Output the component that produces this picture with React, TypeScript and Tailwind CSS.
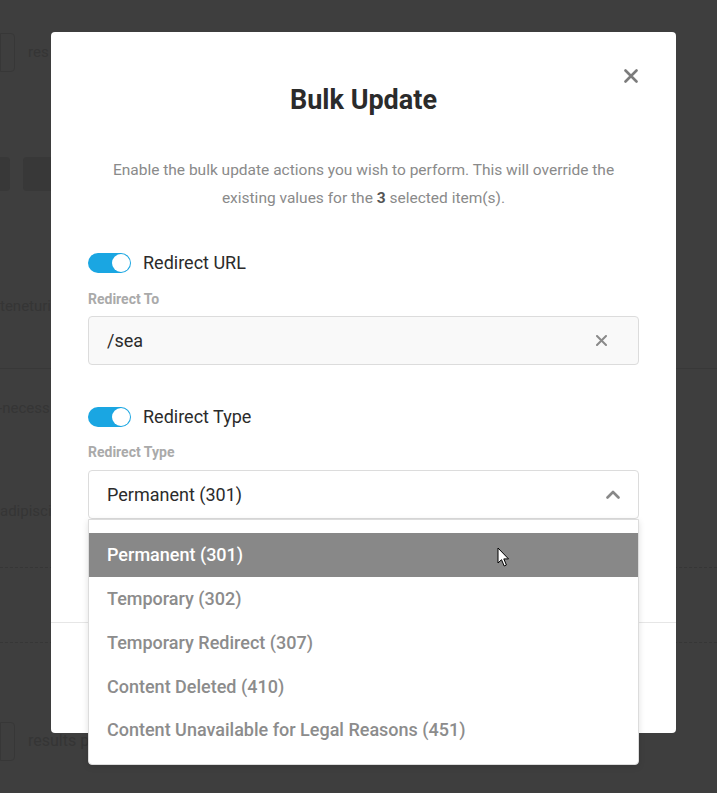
import { useState } from "react";

const OPTIONS = [
  "Permanent (301)",
  "Temporary (302)",
  "Temporary Redirect (307)",
  "Content Deleted (410)",
  "Content Unavailable for Legal Reasons (451)",
];

function Toggle({ on }: { on: boolean }) {
  return (
    <div
      className={
        "flex h-[20px] w-[43px] items-center rounded-full p-[1px] " +
        (on ? "justify-end bg-[#1aa6e2]" : "justify-start bg-[#cfcfcf]")
      }
    >
      <div className="h-[18px] w-[18px] rounded-full bg-white" />
    </div>
  );
}

function Cursor() {
  return (
    <svg width="13" height="21" viewBox="0 0 13 21" className="absolute left-[408px] top-[14px]">
      <path
        d="M1 1 L1 16 L4.5 12.7 L7.2 19 L9.4 18 L6.8 11.9 L11.5 11.9 Z"
        fill="#ffffff"
        stroke="#000000"
        strokeWidth="1"
        strokeLinejoin="round"
      />
    </svg>
  );
}

export default function App() {
  const [urlOn] = useState(true);
  const [typeOn] = useState(true);
  const [selected] = useState(0);

  return (
    <div className="relative h-[793px] w-[717px] overflow-hidden bg-[#3e3e3e] font-['Roboto',sans-serif]">
      {/* page behind the overlay */}
      <div className="flex flex-col text-[15px] text-[#353535]">
        <div className="mt-[33px] flex items-center gap-[13px]">
          <div className="h-[39px] w-[15px] rounded-r-[4px] border border-[#373737]" />
          <span>res</span>
        </div>
        <div className="mt-[85px] flex gap-[13px]">
          <div className="h-[34px] w-[10px] rounded-r-[4px] bg-[#383838]" />
          <div className="h-[34px] w-[40px] rounded-[4px] bg-[#383838]" />
        </div>
        <div className="mt-[104px]">teneturi</div>
        <div className="mt-[50px] h-px w-full bg-[#383838]" />
        <div className="mt-[28px] -ml-[2px]">-necess</div>
        <div className="mt-[81px]">adipisci</div>
        <div className="mt-[44px] border-t border-dashed border-[#363636]" />
        <div className="mt-[74px] border-t border-dashed border-[#363636]" />
        <div className="mt-[79px] flex items-center gap-[13px]">
          <div className="h-[39px] w-[15px] rounded-r-[4px] border border-[#373737]" />
          <span className="text-[16px]">results p</span>
        </div>
      </div>

      {/* modal */}
      <div className="absolute left-[51px] top-[32px] flex h-[701px] w-[625px] flex-col rounded-[4px] bg-white">
        <div className="relative flex flex-col px-[37px] pt-[52px]">
          <button className="absolute right-[38px] top-[37px] text-[#7c7c7c]">
            <svg width="14" height="14" viewBox="0 0 14 14">
              <path d="M1.5 1.5 L12.5 12.5 M12.5 1.5 L1.5 12.5" stroke="currentColor" strokeWidth="2.6" strokeLinecap="round" />
            </svg>
          </button>
          <h1 className="text-center text-[27px] font-bold leading-[32px] text-[#2b2b2b]">Bulk Update</h1>
          <p className="mx-auto mt-[40px] w-[540px] text-center text-[15.5px] leading-[28px] text-[#8a8a8a]">
            Enable the bulk update actions you wish to perform. This will override the existing values for the{" "}
            <b className="font-bold text-[#555]">3</b> selected item(s).
          </p>

          <div className="mt-[39px] flex items-center gap-[12px]">
            <Toggle on={urlOn} />
            <span className="text-[18px] leading-[24px] text-[#2b2b2b]">Redirect URL</span>
          </div>
          <label className="mt-[16px] text-[14px] font-bold leading-[17px] text-[#aaaaaa]">Redirect To</label>
          <div className="mt-[8px] flex h-[49px] items-center justify-between rounded-[4px] border border-[#dcdcdc] bg-[#f9f9f9] pl-[18px] pr-[31px]">
            <span className="text-[18px] text-[#2b2b2b]">/sea</span>
            <svg width="11" height="11" viewBox="0 0 11 11" className="text-[#8a8a8a]">
              <path d="M1 1 L10 10 M10 1 L1 10" stroke="currentColor" strokeWidth="2" strokeLinecap="round" />
            </svg>
          </div>

          <div className="mt-[40px] flex items-center gap-[12px]">
            <Toggle on={typeOn} />
            <span className="text-[18px] leading-[24px] text-[#2b2b2b]">Redirect Type</span>
          </div>
          <label className="mt-[15px] text-[14px] font-bold leading-[17px] text-[#aaaaaa]">Redirect Type</label>
          <div className="relative mt-[9px]">
            <div className="flex h-[49px] items-center justify-between rounded-[4px] border border-[#dcdcdc] bg-white pl-[18px] pr-[18px]">
              <span className="text-[18px] text-[#2b2b2b]">{OPTIONS[selected]}</span>
              <svg width="14" height="9" viewBox="0 0 14 9" className="text-[#888]">
                <path d="M1.5 7.5 L7 2 L12.5 7.5" stroke="currentColor" strokeWidth="2.6" fill="none" strokeLinejoin="round" strokeLinecap="round" />
              </svg>
            </div>
            <ul className="absolute left-0 right-0 top-[49px] z-10 rounded-b-[4px] border border-[#dcdcdc] bg-white pb-[12px] pt-[13px] shadow-[0_2px_6px_rgba(0,0,0,0.12)]">
              {OPTIONS.map((o, i) => (
                <li
                  key={o}
                  className={
                    "relative flex h-[43.75px] items-center px-[18px] text-[18px] font-medium " +
                    (i === selected ? "bg-[#888888] text-white" : "text-[#8c8c8c]")
                  }
                >
                  {o}
                  {i === selected && <Cursor />}
                </li>
              ))}
            </ul>
          </div>
        </div>
        <div className="mt-auto h-[111px] border-t border-[#e6e6e6]" />
      </div>
    </div>
  );
}
